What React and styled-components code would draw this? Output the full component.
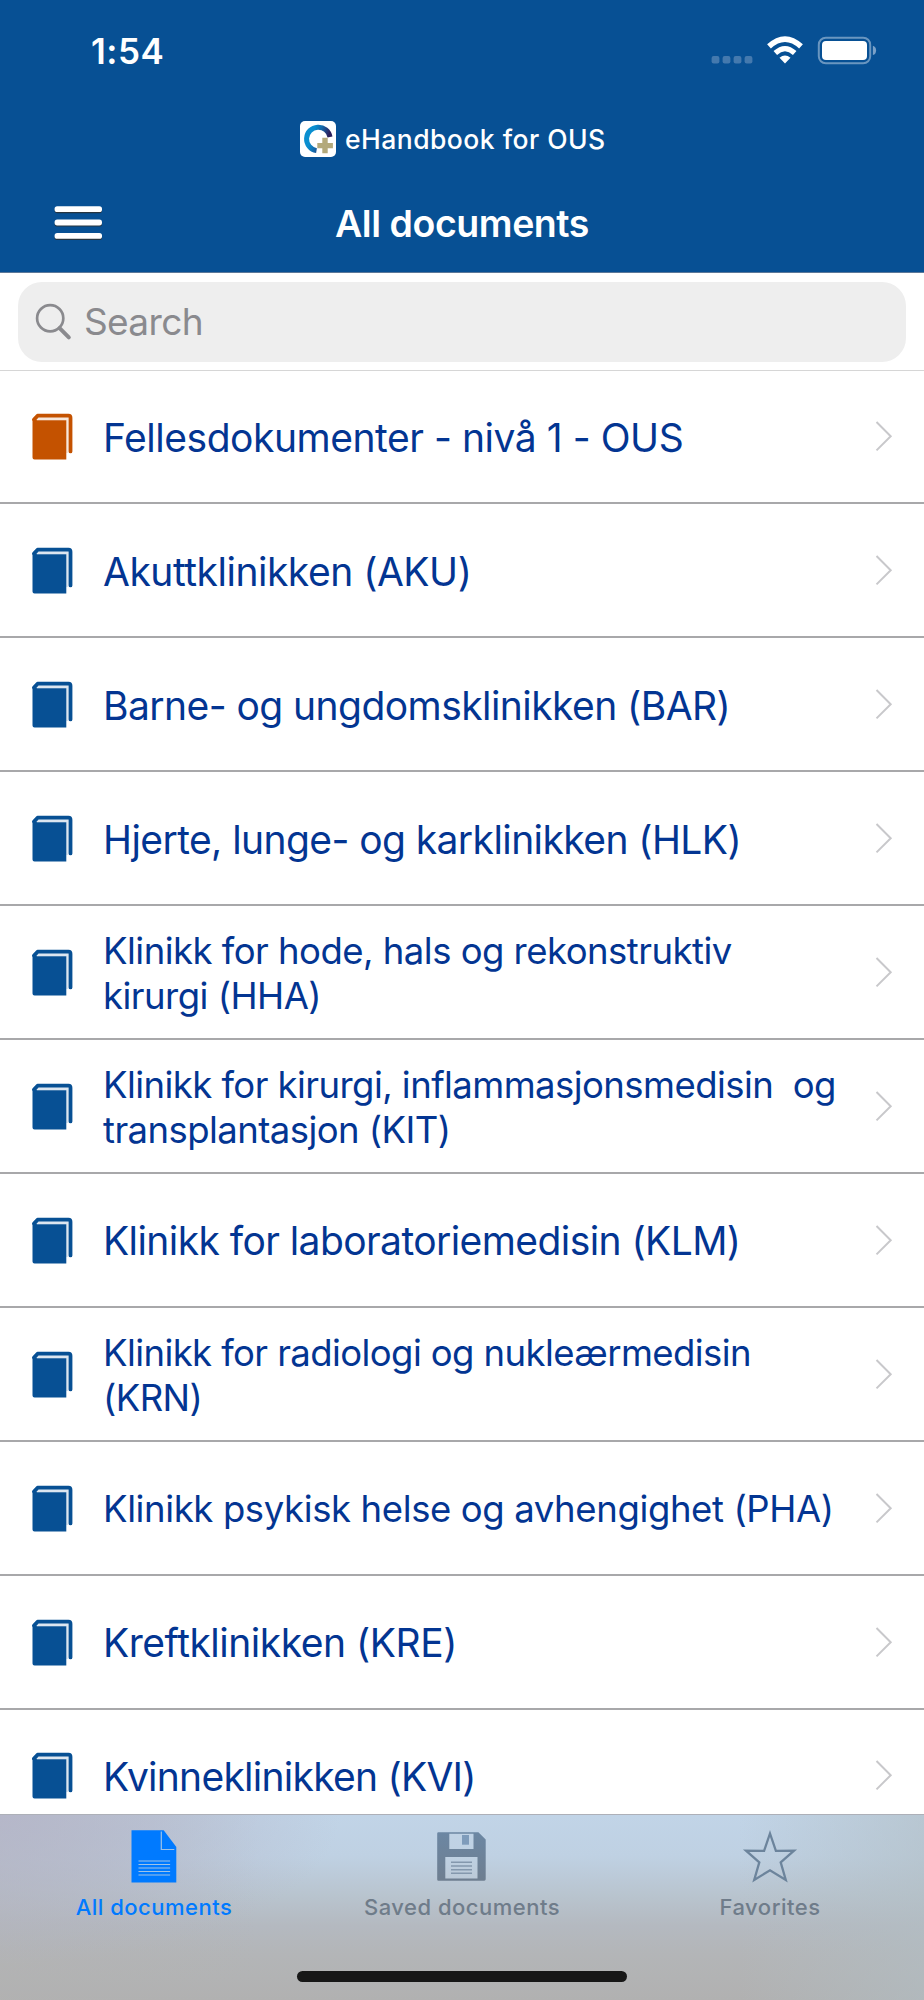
import React from "react";
import styled, { createGlobalStyle } from "styled-components";

const Global = createGlobalStyle`
  * { box-sizing: border-box; }
  body { margin: 0; background: #fff; font-family: Inter, "Noto Sans", sans-serif; }
`;

const Screen = styled.div`
  width: 924px;
  height: 2000px;
  display: flex;
  flex-direction: column;
  overflow: hidden;
  background: #fff;
`;

const Header = styled.header`
  flex: none;
  height: 273px;
  background: #075094;
  border-bottom: 1px solid #5c7899;
  color: #fff;
`;

const StatusBar = styled.div`
  height: 104px;
  padding: 0 47px 0 91px;
  display: flex;
  justify-content: space-between;
`;

const Clock = styled.span`
  padding-top: 29px;
  font-size: 35px;
  line-height: 44px;
  font-weight: 600;
  letter-spacing: 0.5px;
`;

const StatusIcons = styled.svg`
  width: 168px;
  height: 32px;
  margin-top: 34px;
`;

const Brand = styled.div`
  height: 70px;
  padding-left: 300px;
  display: flex;
  align-items: center;
  gap: 9px;
`;

const BrandName = styled.span`
  padding-bottom: 1px;
  font-size: 26.5px;
  font-weight: 500;
  letter-spacing: 0.47px;
  white-space: nowrap;
`;

const TitleBar = styled.div`
  height: 98px;
  padding: 0 53px;
  display: grid;
  grid-template-columns: 52px 1fr 52px;
  align-items: center;
`;

const Title = styled.h1`
  margin: 0;
  padding-top: 2px;
  font-size: 37.5px;
  font-weight: 600;
  line-height: 48px;
  letter-spacing: -0.45px;
  text-align: center;
`;

const SearchArea = styled.div`
  flex: none;
  height: 98px;
  padding: 8.5px 18px 8.5px;
  border-bottom: 1px solid #d6d6d6;
`;

const SearchBox = styled.div`
  height: 80px;
  padding-left: 17px;
  display: flex;
  align-items: center;
  gap: 12px;
  border-radius: 24px;
  background: #eeeeee;
  color: #8a8a8e;
  font-size: 37px;
`;

const SearchLabel = styled.span`
  letter-spacing: -0.65px;
`;

const List = styled.main`
  flex: 1;
  min-height: 0;
  margin-top: -0.7px;
  overflow: hidden;
`;

const Row = styled.div`
  height: 133.93px;
  padding: 0 31px 0 30px;
  display: flex;
  align-items: center;
  border-bottom: 2px solid #a8a8aa;
`;

const RowLabel = styled.span`
  flex: 1;
  padding-top: ${(p) => (p.$small ? 4 : 3)}px;
  margin-left: 28px;
  color: #033592;
  font-size: ${(p) => (p.$small ? "36.5px" : "39px")};
  line-height: ${(p) => (p.$small ? "44.7px" : "48px")};
  letter-spacing: ${(p) => p.$track ?? -0.55}px;
  white-space: pre;
`;

const TabBar = styled.nav`
  flex: none;
  height: 186px;
  border-top: 1px solid #adb0b8;
  background:
    radial-gradient(ellipse 340px 150px at 0 0, rgba(180, 180, 200, 0.8), rgba(180, 181, 200, 0.55) 45%, rgba(179, 180, 200, 0) 100%),
    linear-gradient(to right, rgba(178, 178, 178, 0.5) 0%, rgba(178, 178, 178, 0) 28%),
    linear-gradient(to right, rgba(178, 190, 200, 0) 80%, rgba(178, 190, 196, 0.6) 100%),
    linear-gradient(#c1d4e7 0%, #bfd1e3 22%, #b8c3cd 45%, #b4b9c0 60%, #b3b5b7 76%, #b1b1b1 100%);
`;

const Tabs = styled.div`
  height: 156px;
  display: grid;
  grid-template-columns: repeat(3, 1fr);
`;

const Tab = styled.div`
  padding-top: 14px;
  display: flex;
  flex-direction: column;
  align-items: center;
  color: ${(p) => (p.$active ? "#007aff" : "#6f7c8a")};
`;

const TabLabel = styled.span`
  margin-top: 8px;
  font-size: 22px;
  line-height: 28px;
  font-weight: 500;
  letter-spacing: 0.5px;
`;

const HomeIndicator = styled.div`
  width: 330px;
  height: 11px;
  margin: 0 auto;
  border-radius: 6px;
  background: #171717;
`;

const Logo = () => (
  <svg width="36" height="36" viewBox="0 0 36 36">
    <defs>
      <linearGradient id="ring" x1="0.1" y1="0.3" x2="0.95" y2="0.6">
        <stop offset="0.15" stopColor="#0a8fd0" />
        <stop offset="0.5" stopColor="#1566a8" />
        <stop offset="0.9" stopColor="#2b1f5c" />
      </linearGradient>
    </defs>
    <rect width="36" height="36" rx="5" fill="#fff" />
    <path d="M30 16A11.8 11.8 0 1 0 16.5 29.6" fill="none" stroke="url(#ring)" strokeWidth="5" />
    <path d="M22.3 16.7h5.4v5.2h5.2v5.4h-5.2v5h-5.4v-5h-5v-5.4h5z" fill="#b3a97b" />
  </svg>
);

const MenuIcon = () => (
  <svg width="50" height="38" viewBox="0 0 50 38">
    {[2.2, 15.6, 29].map((y) => (
      <g key={y}>
        <rect x="1.6" y={y + 1.2} width="47.4" height="5.8" rx="2.6" fill="#26343f" />
        <rect x="1.6" y={y} width="47.4" height="5.8" rx="2.6" fill="#fff" />
      </g>
    ))}
  </svg>
);

const SearchIcon = () => (
  <svg width="37" height="38" viewBox="0 0 37 38" fill="none" stroke="#8a8a8e">
    <circle cx="15.2" cy="15.3" r="13.1" strokeWidth="2.7" />
    <path d="M24.6 25.2L33.8 34.4" strokeWidth="4" strokeLinecap="round" />
  </svg>
);

const Book = ({ color }) => (
  <svg width="45" height="50" viewBox="0 0 45 50">
    <path d="M6 5H38.5V42H36V9H6z" fill={color} opacity="0.14" />
    <path d="M4 8.6L7.6 4.7H38.5q2 0 2 2V40.4" fill="none" stroke={color} strokeWidth="3.8" strokeLinecap="round" strokeLinejoin="round" />
    <path d="M2.5 9.2Q2.5 7.4 4.4 7.8L7 9.2h29.3v39.3H4.5q-2 0-2-2z" fill={color} />
  </svg>
);

const Chevron = () => (
  <svg width="18" height="32" viewBox="0 0 18 32">
    <path d="M1.5 2L15.7 16.2L1.5 30.4" fill="none" stroke="#c8c8cb" strokeWidth="2" />
  </svg>
);

const DocIcon = () => (
  <svg width="54" height="56" viewBox="0 0 54 56">
    <path d="M4.5 1.2h32.2L49.3 18v35.6H4.5z" fill="#007aff" />
    <path d="M34.3 2.5v18h13M11.5 32h31.6M11.5 35.5h31.6M11.5 39h31.6M11.5 42.5h31.6M11.5 46h31.6" fill="none" stroke="#9fc2e6" strokeWidth="1.2" />
  </svg>
);

const FloppyIcon = () => (
  <svg width="54" height="56" viewBox="0 0 54 56">
    <defs>
      <linearGradient id="disk" x1="0" y1="0" x2="0" y2="1">
        <stop offset="0" stopColor="#6c87a3" />
        <stop offset="1" stopColor="#6e7e90" />
      </linearGradient>
    </defs>
    <path fillRule="evenodd" fill="url(#disk)" d="M3.4 3.3h40l7.3 7.2v39.8q0 1.4-1.4 1.4H3.4q-1.2 0-1.2-1.2V4.5q0-1.2 1.2-1.2zM14.3 4.7v15.3h24.2V4.7zM10.3 28v21.5h32.2V28z" />
    <path d="M27 6h7v9.7h-7z" fill="#7f9cbb" />
    <path d="M16 33.3h21M16 37h21M16 40.7h21M16 44.3h21" stroke="#8498ad" strokeWidth="1.4" />
  </svg>
);

const StarIcon = () => (
  <svg width="58" height="56" viewBox="0 0 58 56">
    <path d="M29 4.5L34.9 21.9L53 21.7L39.7 33.3L44.8 51L29 41.3L13.2 51L18.3 33.3L5 21.7L23.1 21.9Z" fill="none" stroke="#6c849c" strokeWidth="2.3" />
  </svg>
);

const rows = [
  { text: "Fellesdokumenter - nivå 1 - OUS", color: "#c45200", track: -0.46 },
  { text: "Akuttklinikken (AKU)", track: -0.48 },
  { text: "Barne- og ungdomsklinikken (BAR)", track: -0.56 },
  { text: "Hjerte, lunge- og karklinikken (HLK)", track: -0.58 },
  { text: "Klinikk for hode, hals og rekonstruktiv\nkirurgi (HHA)", small: true, track: -0.52 },
  { text: "Klinikk for kirurgi, inflammasjonsmedisin  og\ntransplantasjon (KIT)", small: true, track: -0.56 },
  { text: "Klinikk for laboratoriemedisin (KLM)", track: -0.58 },
  { text: "Klinikk for radiologi og nukleærmedisin\n(KRN)", small: true, track: -0.59 },
  { text: "Klinikk psykisk helse og avhengighet (PHA)", small: true, track: -0.38 },
  { text: "Kreftklinikken (KRE)", track: -0.48 },
  { text: "Kvinneklinikken (KVI)", track: -0.74 },
];

export default function App() {
  return (
    <Screen>
      <Global />
      <Header>
        <StatusBar>
          <Clock>1:54</Clock>
          <StatusIcons viewBox="0 0 168 32">
            {[0, 11, 22, 33].map((x) => (
              <rect key={x} x={x + 2.6} y="22" width="7.8" height="7.4" rx="2" fill="#4479ae" />
            ))}
            <g fill="none" stroke="#fff" strokeWidth="5.6">
              <path d="M60 12.4Q76 -2.2 92 12.4" />
              <path d="M66.3 19Q76 10.2 85.7 19" strokeWidth="5.2" />
            </g>
            <path d="M76 29.5L70.5 23.8Q76 19.4 81.5 23.8Z" fill="#fff" />
            <rect x="109.8" y="3.7" width="51.4" height="25.6" rx="7" fill="none" stroke="#6a96c0" strokeWidth="2" />
            <rect x="113" y="7" width="45" height="19" rx="4" fill="#fff" />
            <path d="M163.9 11.7q3.2 1.2 3.2 4.7t-3.2 4.7z" fill="#7ba1c8" />
          </StatusIcons>
        </StatusBar>
        <Brand>
          <Logo />
          <BrandName>eHandbook for OUS</BrandName>
        </Brand>
        <TitleBar>
          <MenuIcon />
          <Title>All documents</Title>
        </TitleBar>
      </Header>
      <SearchArea>
        <SearchBox>
          <SearchIcon />
          <SearchLabel>Search</SearchLabel>
        </SearchBox>
      </SearchArea>
      <List>
        {rows.map((r) => (
          <Row key={r.text}>
            <Book color={r.color || "#075094"} />
            <RowLabel $small={r.small} $track={r.track}>{r.text}</RowLabel>
            <Chevron />
          </Row>
        ))}
      </List>
      <TabBar>
        <Tabs>
          <Tab $active>
            <DocIcon />
            <TabLabel>All documents</TabLabel>
          </Tab>
          <Tab>
            <FloppyIcon />
            <TabLabel>Saved documents</TabLabel>
          </Tab>
          <Tab>
            <StarIcon />
            <TabLabel>Favorites</TabLabel>
          </Tab>
        </Tabs>
        <HomeIndicator />
      </TabBar>
    </Screen>
  );
}
